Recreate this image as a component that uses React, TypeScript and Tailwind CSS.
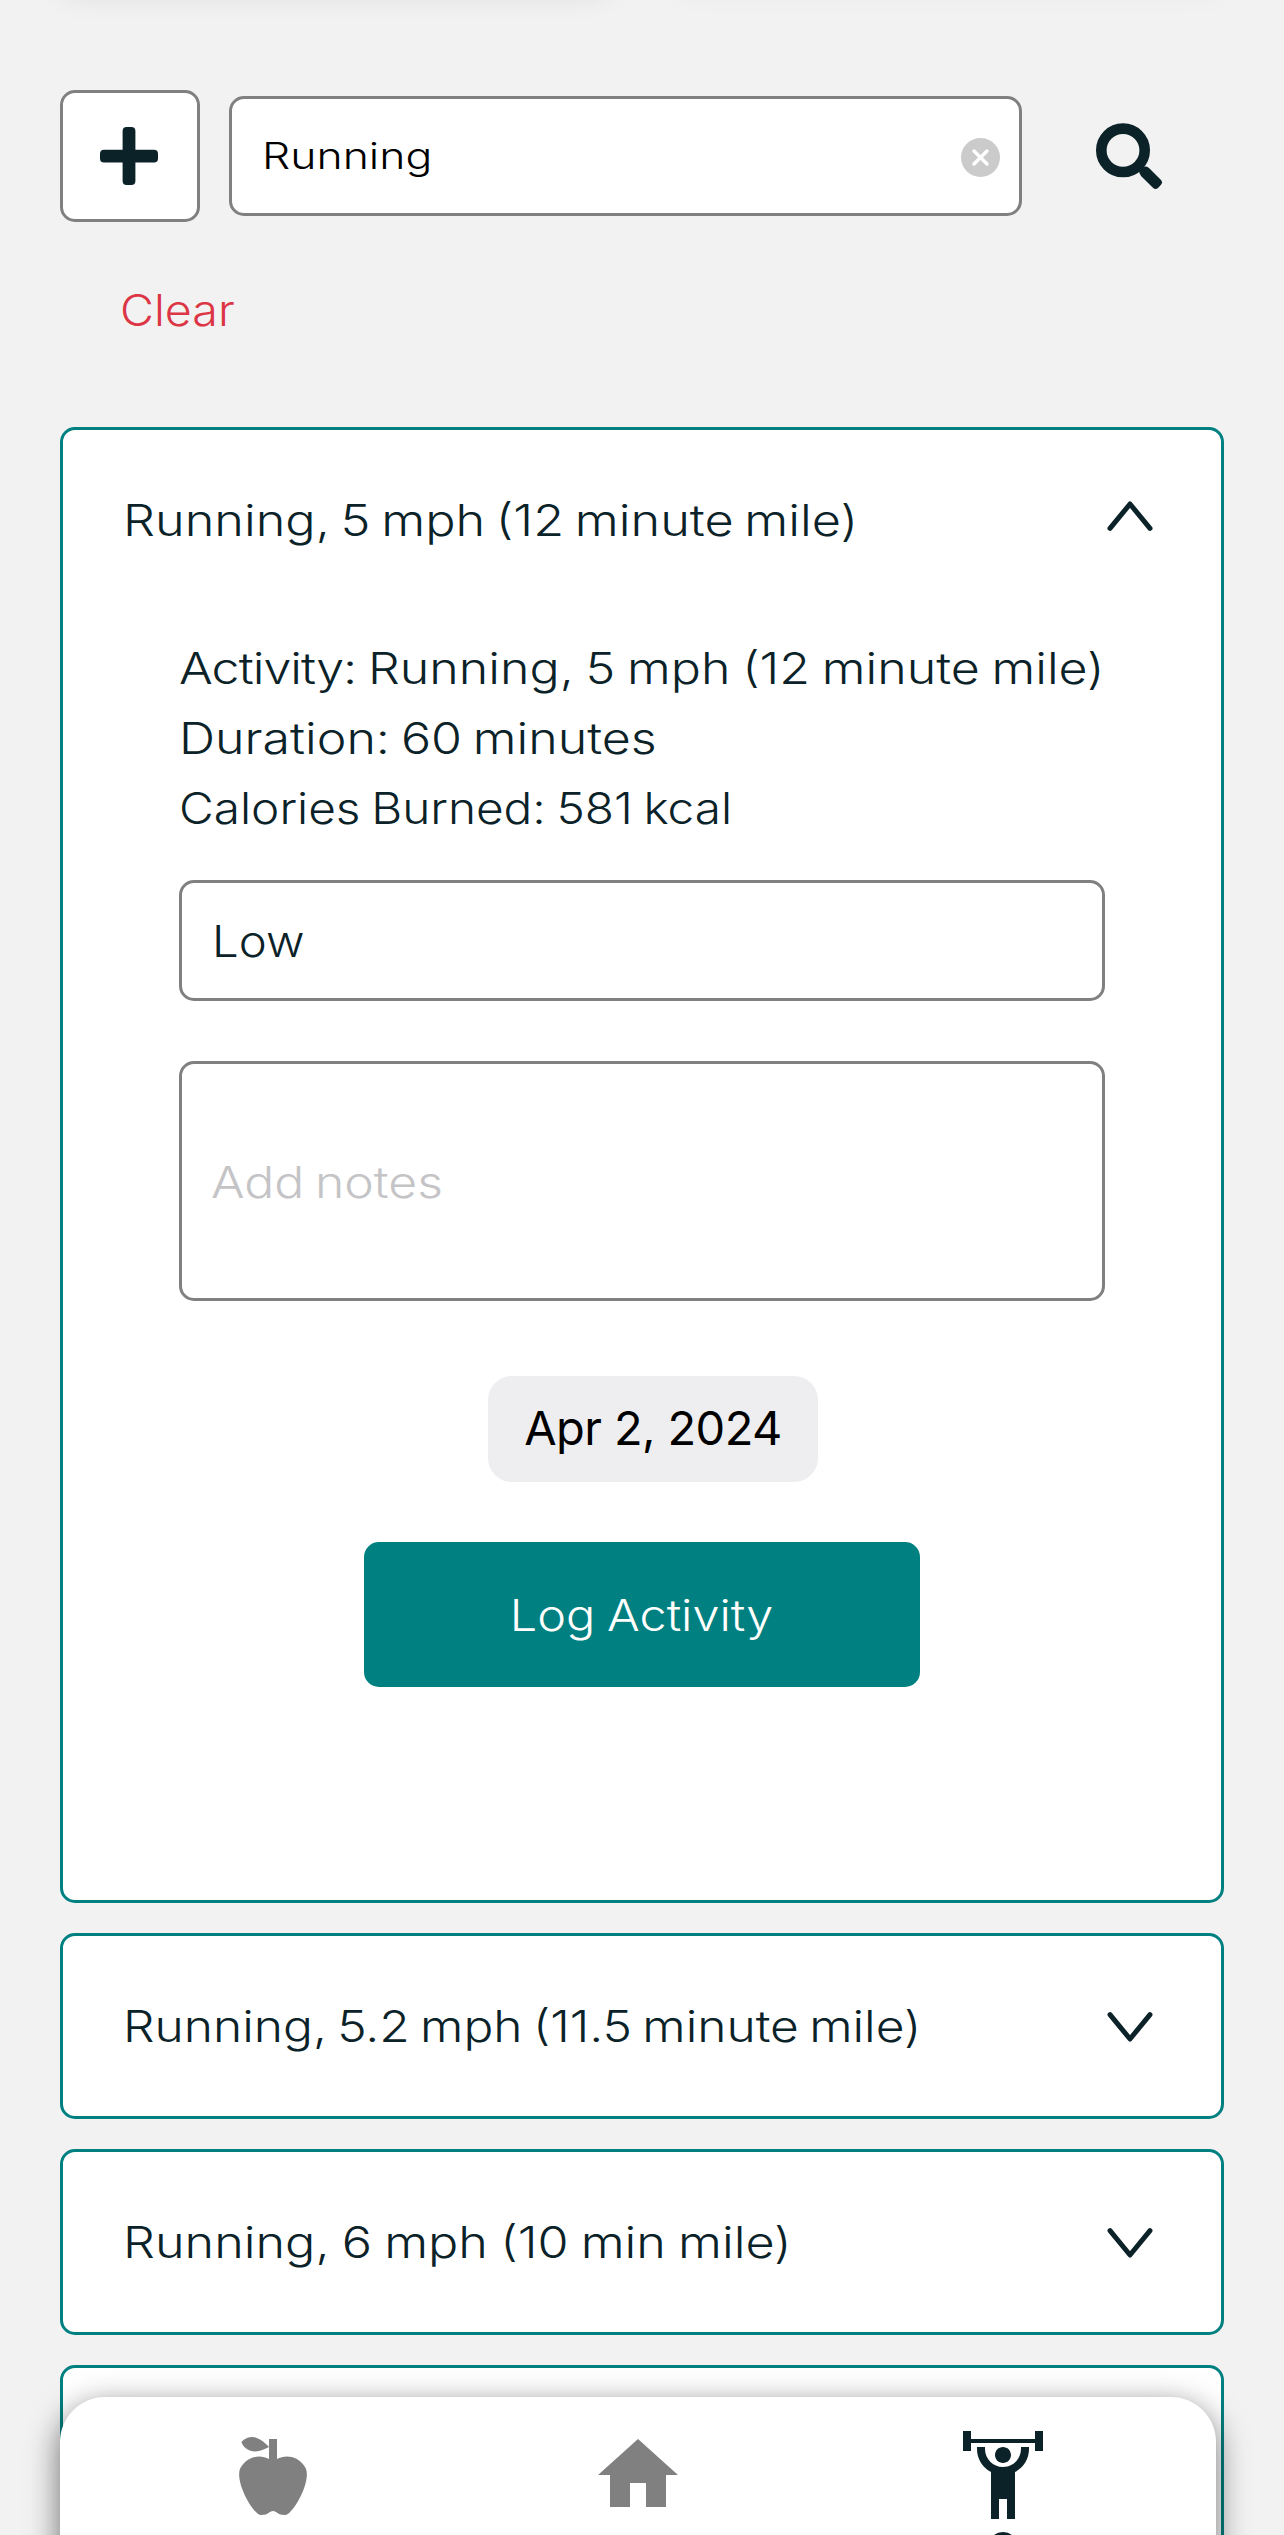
import type { ReactNode } from 'react';

const INK = '#0b2228';

function Chevron({ up = false }: { up?: boolean }) {
  return (
    <svg width="46" height="30" viewBox="0 0 46 30" fill="none" className="shrink-0">
      <path
        d={up ? 'M3 27.3 23 3 43 27.3' : 'M3 2.7 23 27 43 2.7'}
        stroke={INK}
        strokeWidth="5"
        strokeLinecap="round"
        strokeLinejoin="round"
      />
    </svg>
  );
}

function CardHeader({ children, open = false }: { children: ReactNode; open?: boolean }) {
  return (
    <div className="flex h-[180px] items-center justify-between pr-[68.5px] pl-[60px]">
      <h2 className="leading-[54px]">{children}</h2>
      <div className={open ? 'pb-[8px]' : 'pt-px'}>
        <Chevron up={open} />
      </div>
    </div>
  );
}

function Card({ children }: { children: ReactNode }) {
  return (
    <section className="w-[1164px] shrink-0 rounded-[15px] border-[3px] border-[#008080] bg-white">
      {children}
    </section>
  );
}

export default function App() {
  return (
    <div className="relative flex h-[2535px] w-[1284px] flex-col overflow-hidden bg-[#f2f2f2] px-[60px] font-['Inter',sans-serif] text-[43px] font-light whitespace-nowrap text-[#0b2228]">
      {/* Lower edges of the summary tiles scrolled out of view */}
      <div className="-mt-[106px] flex h-[100px] shrink-0 justify-between">
        <div className="w-[550px] rounded-[15px] shadow-[0_0_30px_rgba(0,0,0,0.1)]" />
        <div className="w-[550px] rounded-[15px] shadow-[0_0_30px_rgba(0,0,0,0.045)]" />
      </div>

      <div className="mt-[96px] flex h-[132px] shrink-0 items-center">
        <button className="flex h-[132px] w-[140px] items-center justify-center rounded-[15px] border-[3px] border-[#808080] bg-white">
          <svg width="58" height="58" viewBox="0 0 58 58" fill={INK} className="-translate-x-[1px]">
            <rect x="22.6" width="12.8" height="58" rx="4" />
            <rect y="22.8" width="58" height="12.8" rx="4" />
          </svg>
        </button>
        <div className="ml-[29px] flex h-[120px] w-[793px] items-center justify-between rounded-[15px] border-[3px] border-[#808080] bg-white pr-[19.5px] pl-[30px] text-[37px] text-black">
          <span className="inline-block origin-left scale-x-[1.203]">Running</span>
          <svg width="39" height="39" viewBox="0 0 39 39" className="mt-[3px]">
            <circle cx="19.5" cy="19.5" r="19.5" fill="#cbcbcb" />
            <path d="M13 13l13 13M26 13 13 26" stroke="#fff" strokeWidth="3.4" strokeLinecap="round" />
          </svg>
        </div>
        <svg width="67" height="67" viewBox="0 0 67 67" className="ml-[74px]">
          <circle cx="27" cy="27.3" r="21.7" fill="none" stroke={INK} strokeWidth="10.6" />
          <path
            d="M43 47.5 47.5 43.8Q50.5 43 53 45L65 57Q67 59.3 65 61.7L62 65Q59.5 67.2 57.200 65L45 53Q43 50.500 43 47.500Z"
            fill={INK}
          />
        </svg>
      </div>

      <button className="mt-[58px] h-[60px] shrink-0 pl-[60px] text-left leading-[60px] text-[#dc3545]">
        <span className="inline-block origin-left scale-x-[1.084]">Clear</span>
      </button>

      <main className="mt-[87px] flex flex-col gap-[30px]">
        <Card>
          <div className="h-[1470px]">
            <CardHeader open>
              <span className="inline-block origin-left scale-x-[1.172] [word-spacing:-3px]">Running, 5 mph (12 minute mile)</span>
            </CardHeader>
            <div className="mt-[23px] flex flex-col px-[116px]">
              <div className="flex h-[210px] flex-col items-start leading-[70px]">
                <p className="origin-left scale-x-[1.165] [word-spacing:-2px]">
                  <span className="tracking-[-0.8px]">Activity:</span> Running, 5 mph (12 minute mile)
                </p>
                <p className="origin-left scale-x-[1.165] [word-spacing:-2.75px]">Duration: 60 minutes</p>
                <p className="origin-left scale-x-[1.11] [word-spacing:-2.5px]">Calories Burned: 581 kcal</p>
              </div>
              <div className="mt-[37px] flex h-[121px] items-center rounded-[15px] border-[3px] border-[#808080] pt-[2px] pl-[30px]">
                <span className="origin-left scale-x-[1.1]">Low</span>
              </div>
              <div className="mt-[60px] flex h-[240px] items-center rounded-[15px] border-[3px] border-[#808080] pt-[3px] pl-[29px] text-[#c4c4c6]">
                <span className="origin-left scale-x-[1.16] [word-spacing:-3px]">Add notes</span>
              </div>
              <div className="mt-[75px] ml-[22px] flex h-[106px] w-[330px] items-center justify-center self-center rounded-[24px] bg-[#eeeef0] pb-[2px] text-[47px] font-normal tracking-[-0.6px] text-black">
                Apr 2, 2024
              </div>
              <button className="mt-[60px] flex h-[145px] w-[556px] items-center justify-center self-center rounded-[15px] bg-[#008080] pt-[2px] text-white">
                <span className="scale-x-[1.13] [word-spacing:-1.8px]">Log Activity</span>
              </button>
            </div>
          </div>
        </Card>
        <Card>
          <CardHeader>
            <span className="inline-block origin-left scale-x-[1.155] [word-spacing:-3.2px]">Running, 5.2 mph (11.5 minute mile)</span>
          </CardHeader>
        </Card>
        <Card>
          <CardHeader>
            <span className="inline-block origin-left scale-x-[1.17] [word-spacing:-1.7px]">Running, 6 mph (10 min mile)</span>
          </CardHeader>
        </Card>
        <Card>
          <div className="h-[180px]" />
        </Card>
      </main>

      {/* Floating tab bar */}
      <nav className="absolute top-[2397px] left-[60px] flex h-[240px] w-[1156px] justify-between rounded-[45px] bg-white px-[165px] pt-[30px] shadow-[0_9px_32px_rgba(0,0,0,0.56)]">
        <svg width="96" height="96" viewBox="0 0 24 24" fill="#808080">
          <path d="M20,10C22,13 17,22 15,22C13,22 13,21 12,21C11,21 11,22 9,22C7,22 2,13 4,10C6,7 9,7 11,8V5C5.38,8.07 4.11,3.78 4.11,3.78C4.11,3.78 6.77,0.19 11,5V3H13V8C15,7 18,7 20,10Z" />
        </svg>
        <svg width="96" height="96" viewBox="0 0 24 24" fill="#808080">
          <path d="M10,20V14H14V20H19V12H22L12,3L2,12H5V20H10Z" />
        </svg>
        <div className="flex w-[96px] flex-col items-center">
          <svg width="96" height="96" viewBox="0 0 24 24" fill={INK}>
            <path d="M12 5C10.89 5 10 5.89 10 7S10.89 9 12 9 14 8.11 14 7 13.11 5 12 5M22 1V6H20V4H4V6H2V1H4V3H20V1H22M15 11.26V23H13V18H11V23H9V11.26C6.93 10.17 5.5 8 5.5 5.5L5.5 5H7.5L7.5 5.5C7.5 8 9.5 10 12 10S16.5 8 16.5 5.5L16.5 5H18.5L18.5 5.5C18.5 8 17.07 10.17 15 11.26Z" />
          </svg>
          <span className="mt-[9px] size-[30px] rounded-full bg-[#0b2228]" />
        </div>
      </nav>
    </div>
  );
}
